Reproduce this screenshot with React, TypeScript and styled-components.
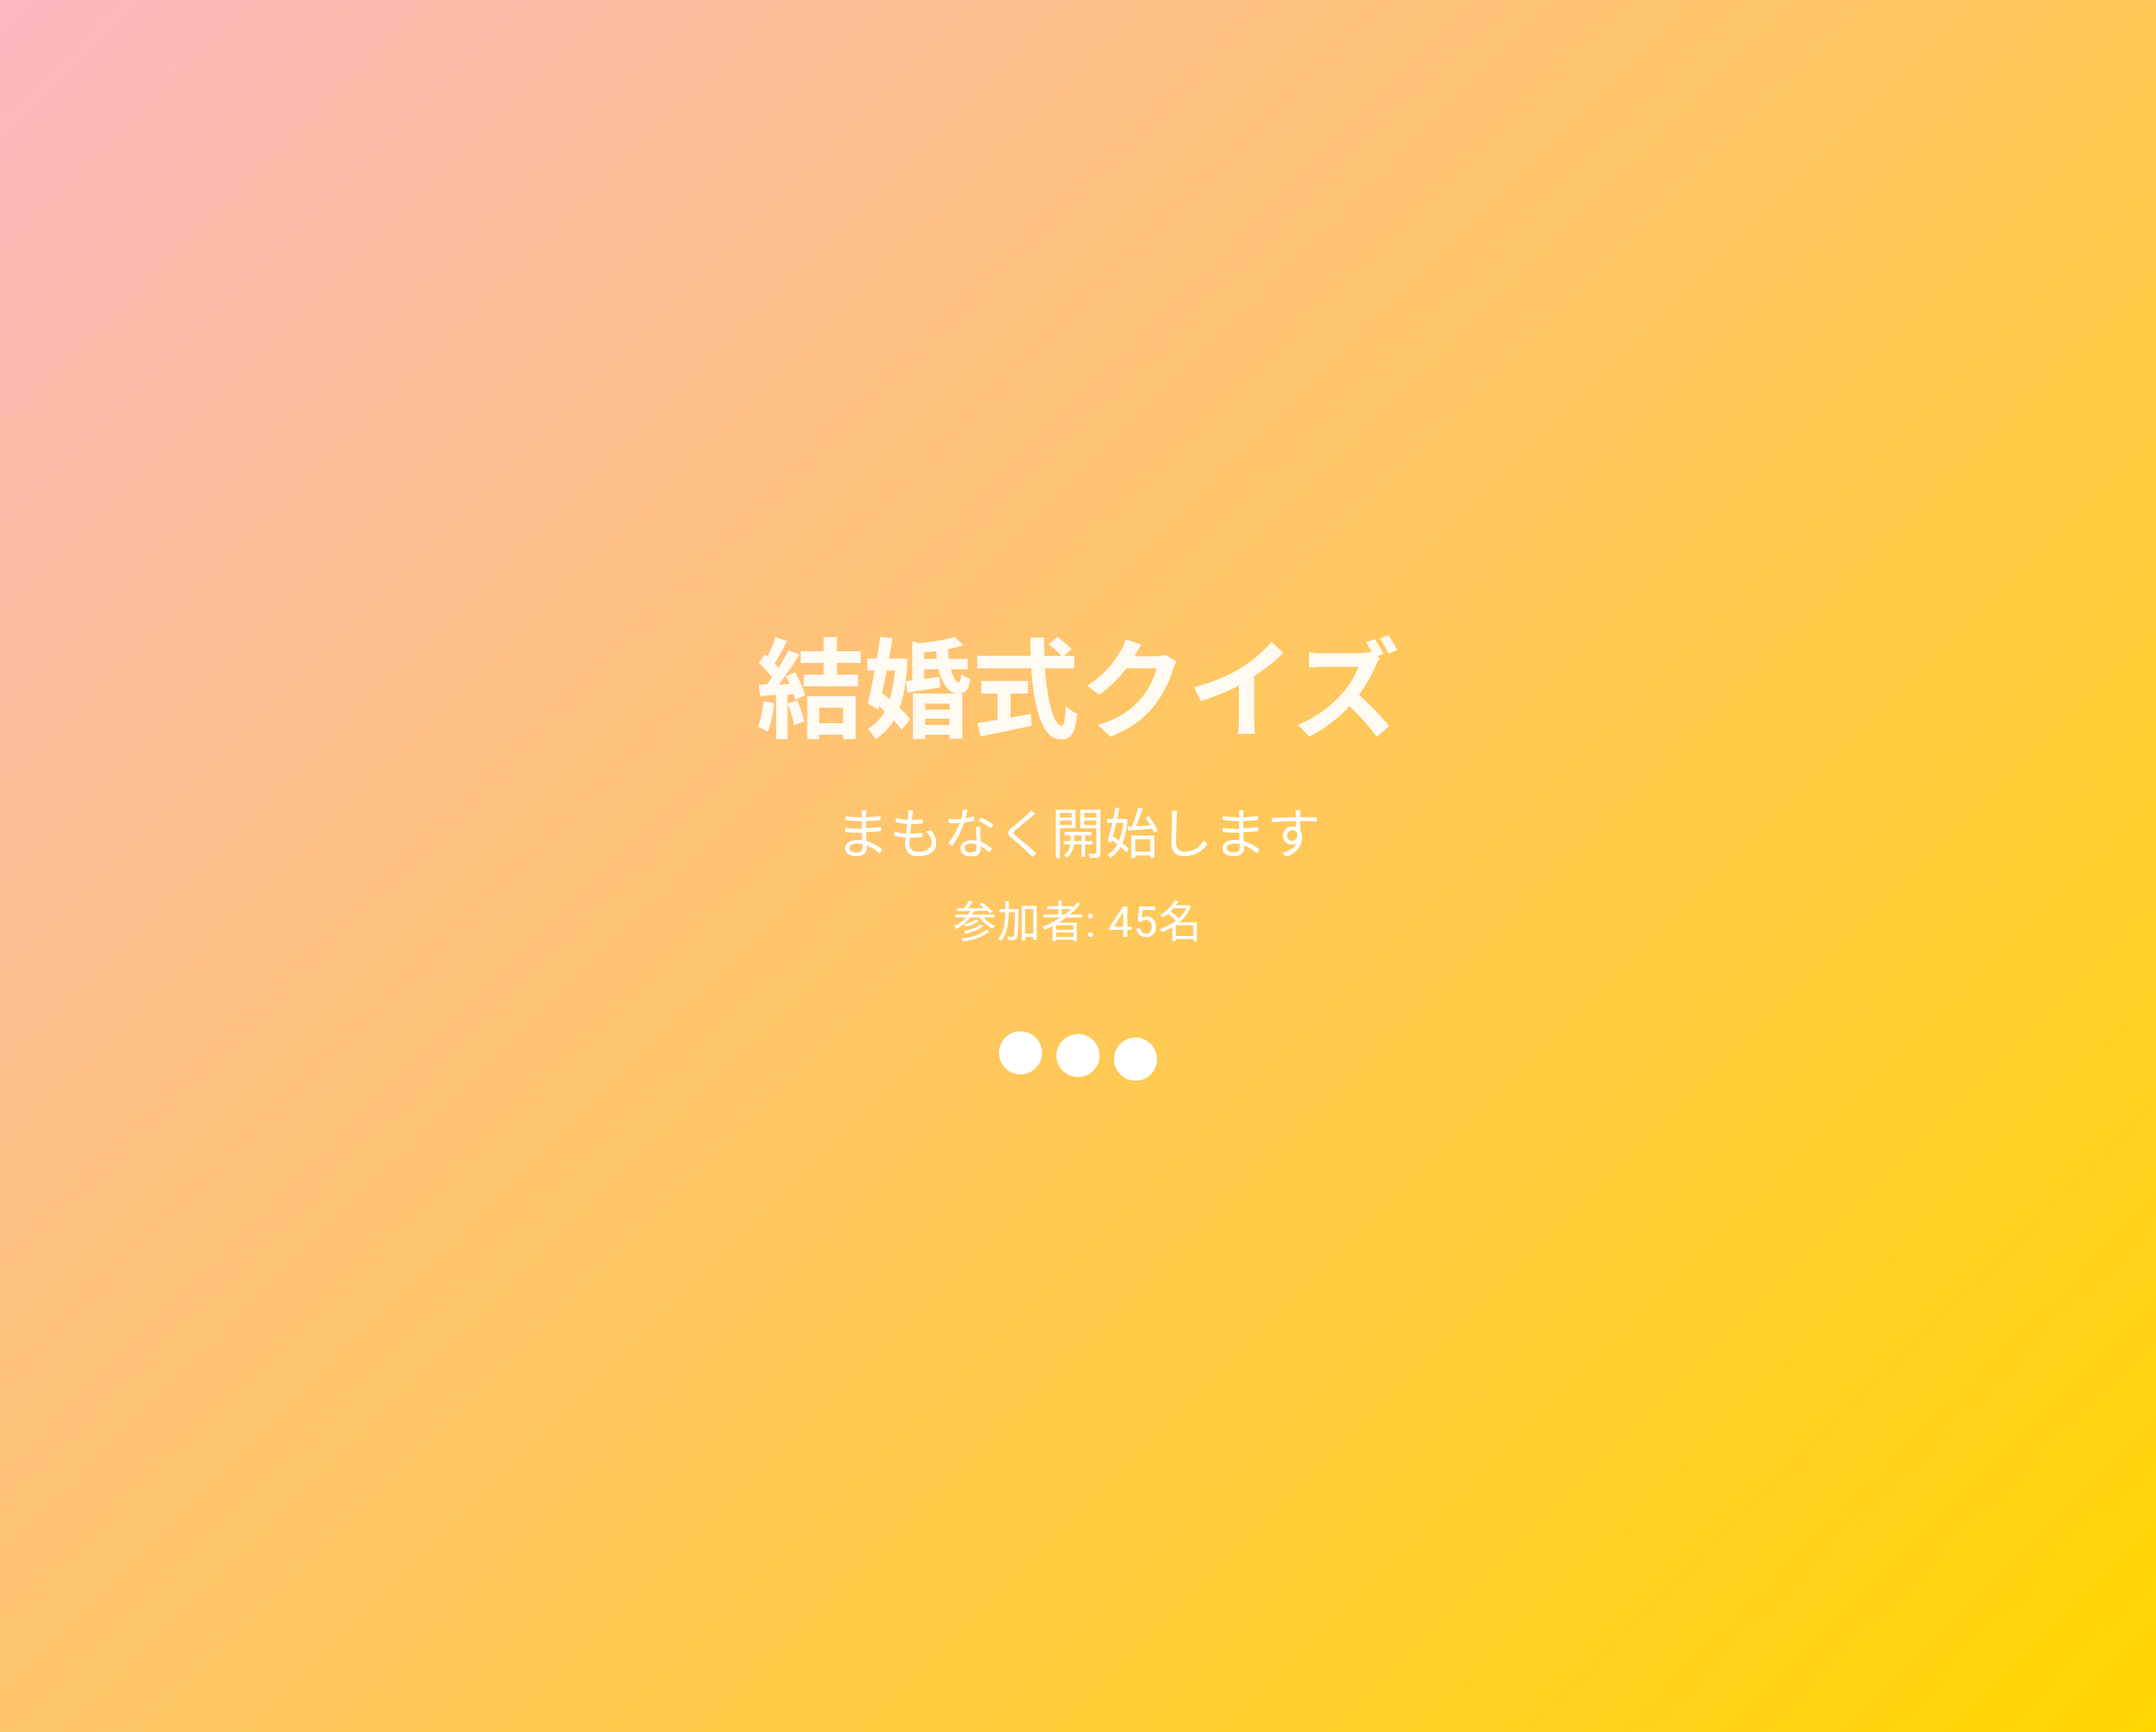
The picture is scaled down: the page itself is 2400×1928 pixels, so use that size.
import React from "react";
import styled, { createGlobalStyle } from "styled-components";

const GlobalStyle = createGlobalStyle`
  html, body {
    margin: 0;
    padding: 0;
  }
  body {
    font-family: "Noto Sans CJK JP", "Noto Sans", sans-serif;
  }
`;

const Screen = styled.main`
  min-height: 100vh;
  box-sizing: border-box;
  padding-bottom: 32px;
  display: flex;
  flex-direction: column;
  align-items: center;
  justify-content: center;
  background: linear-gradient(135deg, #ffb6c1 0%, #ffd700 100%);
  color: #ffffff;
  text-align: center;
`;

const Title = styled.h1`
  margin: 0;
  font-size: 120px;
  line-height: 1;
  font-weight: 700;
  color: #fffaf2;
`;

const Subtitle = styled.p`
  margin: 74px 0 0;
  font-size: 60px;
  line-height: 1;
  font-weight: 400;
`;

const Participants = styled.p`
  margin: 49px 0 0;
  font-family: Roboto, "Noto Sans CJK JP", sans-serif;
  font-size: 48px;
  line-height: 1;
  font-weight: 400;
  letter-spacing: 1px;
`;

const Dots = styled.div`
  margin-top: 97px;
  display: flex;
  gap: 16px;
  align-items: flex-start;
`;

const Dot = styled.span<{ $offset: number }>`
  width: 48px;
  height: 48px;
  border-radius: 50%;
  background: #ffffff;
  transform: translateY(${(p) => p.$offset}px);
`;

export default function App() {
  return (
    <>
      <GlobalStyle />
      <Screen>
        <Title>結婚式クイズ</Title>
        <Subtitle>まもなく開始します</Subtitle>
        <Participants>参加者: 45名</Participants>
        <Dots>
          <Dot $offset={0} />
          <Dot $offset={3} />
          <Dot $offset={7} />
        </Dots>
      </Screen>
    </>
  );
}
